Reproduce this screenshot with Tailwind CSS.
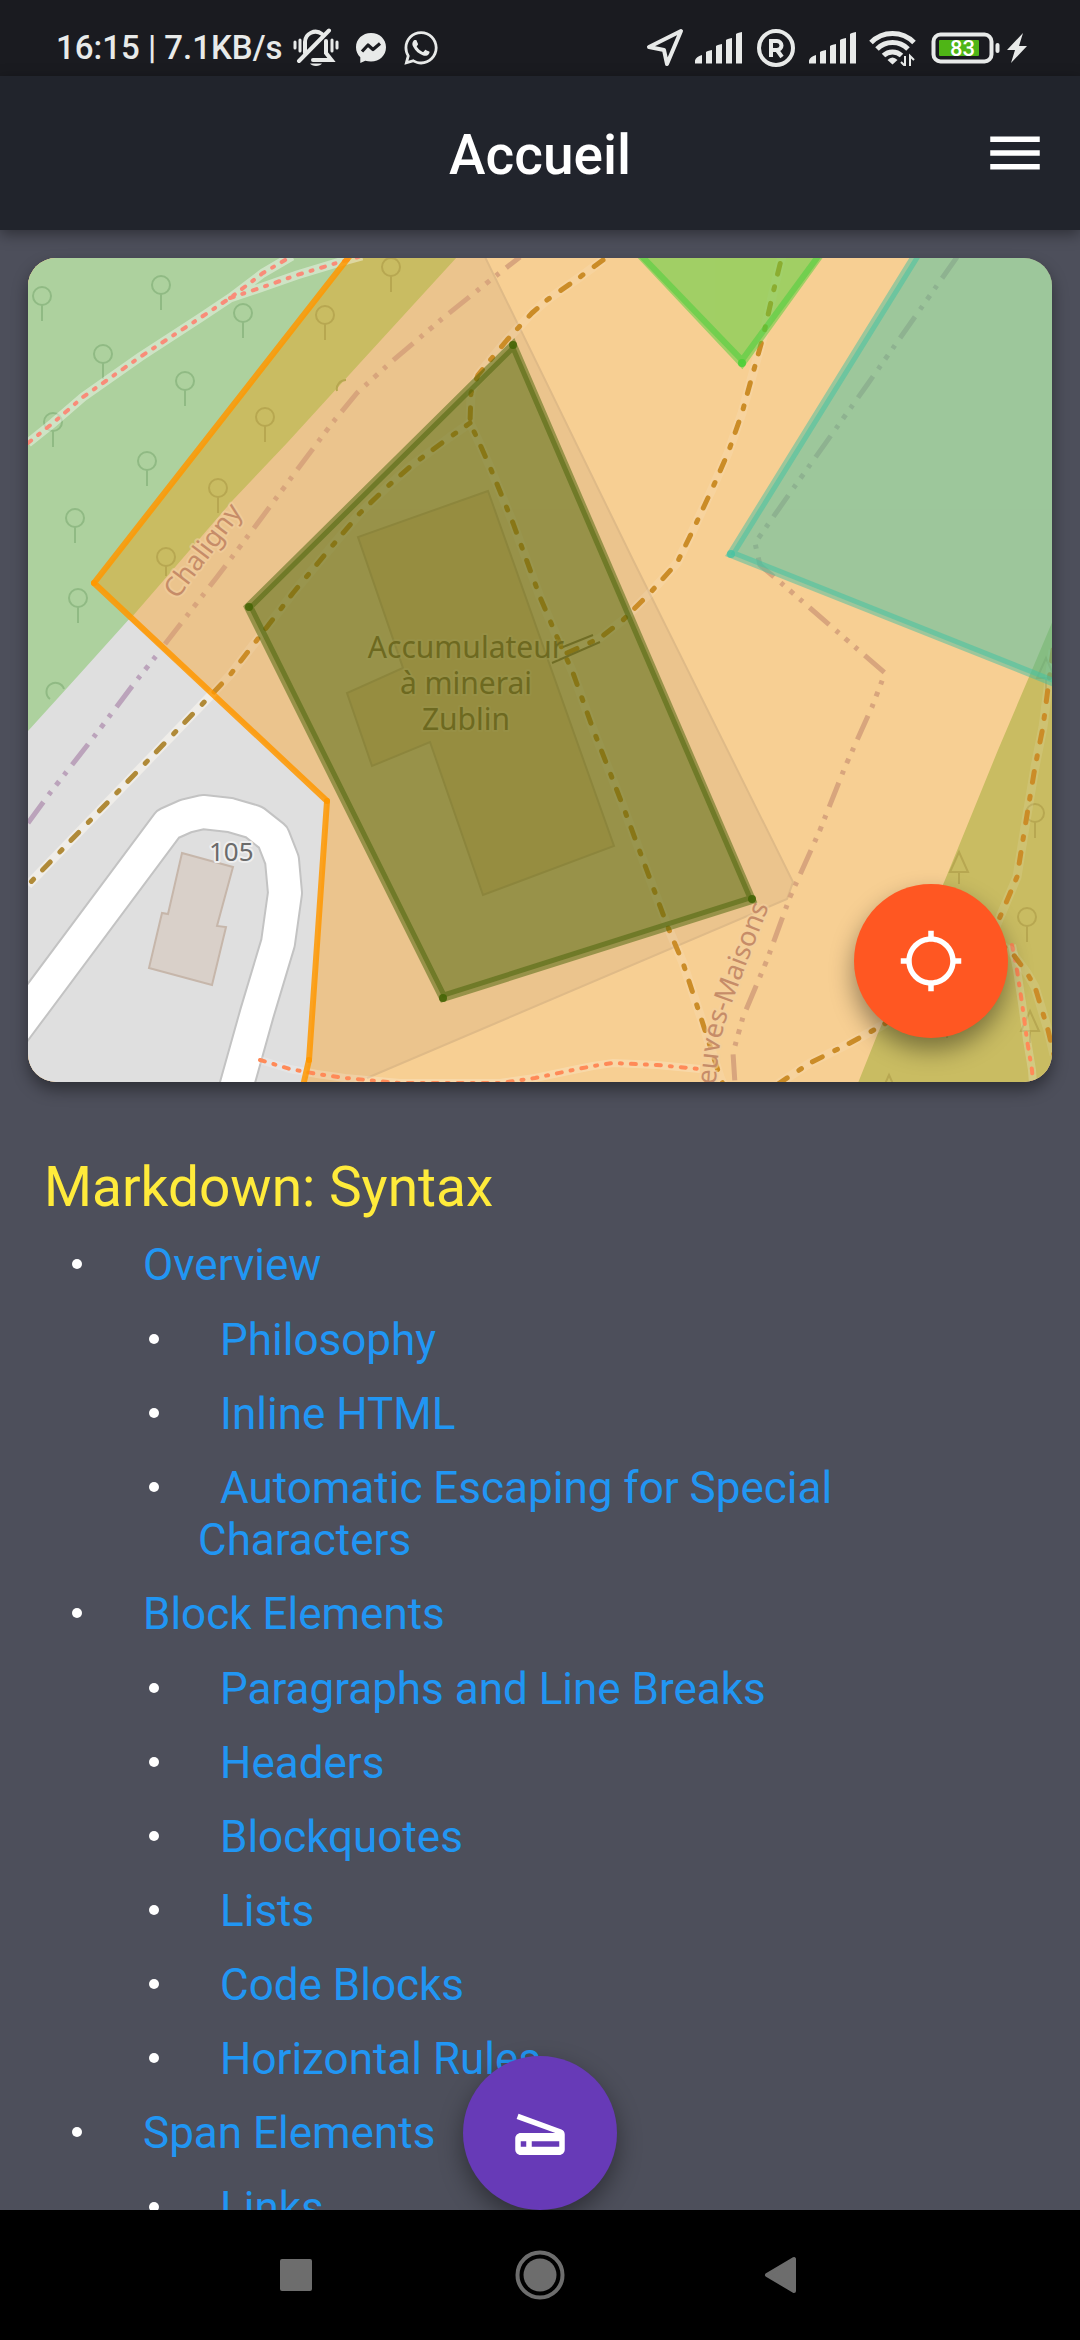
<!DOCTYPE html>
<html lang="fr">
<head>
<meta charset="utf-8">
<meta name="viewport" content="width=device-width, initial-scale=1">
<title>Accueil</title>
<script src="https://cdn.jsdelivr.net/npm/@tailwindcss/browser@4"></script>
</head>
<body class="bg-[#4d4f5b] font-['Roboto',sans-serif]">
<div class="relative flex h-screen flex-col overflow-hidden">

  <!-- Status bar -->
  <div class="flex h-[76px] shrink-0 items-center justify-between bg-[#1a1b20] pl-14 pr-[53px] pt-5 text-[#e8eae9]">
    <div class="flex items-center">
      <span class="whitespace-nowrap text-[33px] leading-10 font-medium">16:15 | 7.1KB/s</span>
      <svg class="ml-[10px] h-10 w-[46px]" viewBox="0 0 46 40" fill="none" stroke="currentColor" stroke-width="4" stroke-linecap="round" aria-hidden="true">
        <path d="M12 25V14a10.500 10.500 0 0 1 17-8M33 13v12l5.500 7H20"/>
        <path d="M6 33 36 2.500"/>
        <path d="M2 14v6M7 12v11M39 12v11M44 14v6" stroke-width="3"/>
        <path d="M17 35.500h12a6.500 4 0 0 1-12 0z" fill="currentColor" stroke="none"/>
      </svg>
      <svg class="ml-4 size-8" viewBox="0 0 32 32" aria-hidden="true">
        <path fill="currentColor" d="M16 1C7.500 1 1 7.200 1 15.200c0 4 1.600 7.500 4.300 10V31l5-2.300c1.800.5 3.700.8 5.700.8 8.500 0 15-6.200 15-14.300S24.500 1 16 1z"/>
        <path fill="none" stroke="#1a1b20" stroke-width="3.200" stroke-linejoin="round" d="m7 19.500 6-6.500 5 4.500 7-6"/>
      </svg>
      <svg class="ml-[14px] size-10" viewBox="0 0 24 24" fill="currentColor" aria-hidden="true">
        <path d="M12.040 2C6.580 2 2.130 6.450 2.130 11.910c0 1.750.46 3.450 1.320 4.950L2.050 22l5.250-1.380c1.450.79 3.080 1.210 4.740 1.210 5.460 0 9.910-4.450 9.910-9.910C21.950 6.450 17.500 2 12.040 2zm0 18.150c-1.480 0-2.930-.4-4.200-1.150l-.3-.18-3.120.82.83-3.040-.2-.31a8.260 8.260 0 0 1-1.260-4.380c0-4.540 3.700-8.240 8.250-8.240s8.240 3.700 8.240 8.240-3.690 8.240-8.240 8.240zm4.520-6.160c-.25-.12-1.470-.72-1.690-.81-.23-.08-.39-.12-.56.13-.16.24-.64.8-.78.97-.15.16-.29.18-.54.06-1.200-.6-2.500-1.500-3.500-3.100-.2-.3.300-.5.700-1.300.07-.16.03-.31-.03-.43s-.56-1.340-.76-1.840c-.2-.48-.41-.42-.56-.43-.5 0-.9 0-1.300.4-.8.900-1 2.200-.3 3.500 1.500 2.800 3.500 4.500 6.100 5.400 1.300.4 3.200.1 3.700-1.600.2-.7.100-.7-.48-.95z"/>
      </svg>
    </div>
    <div class="flex items-center">
      <svg class="h-10 w-10" viewBox="0 0 40 40" fill="none" stroke="currentColor" stroke-width="4" stroke-linejoin="round" aria-hidden="true">
        <path d="M36 3 4 19l15 3 3 14z"/>
      </svg>
      <svg class="ml-[10px] h-8 w-12" viewBox="0 0 48 32" fill="currentColor" aria-hidden="true">
        <path d="M0 31.500v-3q1-4 7-5.500v8.500zM11 31.500V20q1-1 6-2v13.500zM21 31.500V14q1-1 6-2v19.500zM31 31.500V8q1-1 6-2v25.500zM41 31.500V2q1-1 6-2v31.500z"/>
      </svg>
      <svg class="ml-[14px] size-[38px]" viewBox="0 0 38 38" fill="none" stroke="currentColor" stroke-width="4" aria-hidden="true">
        <circle cx="19" cy="19" r="17"/>
        <path d="M14 28V12h6a4.500 4.500 0 0 1 0 9h-6M20 21l5 7"/>
      </svg>
      <svg class="ml-[14px] h-8 w-12" viewBox="0 0 48 32" fill="currentColor" aria-hidden="true">
        <path d="M0 31.500v-3q1-4 7-5.500v8.500zM11 31.500V20q1-1 6-2v13.500zM21 31.500V14q1-1 6-2v19.500zM31 31.500V8q1-1 6-2v25.500zM41 31.500V2q1-1 6-2v31.500z"/>
      </svg>
      <svg class="ml-3 h-9 w-[48px]" viewBox="0 0 48 36" fill="none" stroke="currentColor" stroke-width="5" aria-hidden="true">
        <path d="M2 12.500a30 30 0 0 1 43 0M8 19a22 22 0 0 1 31 0M14.500 25.500a13 13 0 0 1 18 0"/>
        <path d="M23.500 34.500 18.500 30q5-5 10 0z" fill="currentColor" stroke="none"/>
        <path d="M36 26v10l-4-4M41 36V26l4 4" stroke-width="2"/>
      </svg>
      <svg class="ml-[14px] h-8 w-[70px]" viewBox="0 0 70 32" aria-hidden="true">
        <rect x="2.500" y="2.500" width="58" height="27" rx="7" fill="none" stroke="currentColor" stroke-width="4"/>
        <rect x="8" y="8" width="40" height="16" rx="1" fill="#4fb516"/>
        <rect x="64.500" y="11" width="4" height="10" rx="2" fill="currentColor"/>
        <text x="31.500" y="24" text-anchor="middle" font-family="Roboto, sans-serif" font-size="22" font-weight="500" fill="#fff">83</text>
      </svg>
      <svg class="ml-[6px] h-[30px] w-5" viewBox="0 0 20 30" fill="currentColor" aria-hidden="true"><path d="M16 0 0 17h8L4 30l16-17h-8z"/></svg>
    </div>
  </div>

  <!-- App bar -->
  <header class="relative z-10 grid h-[154px] shrink-0 grid-cols-[66px_1fr_66px] items-center bg-[#21242c] px-8 text-white shadow-[0_4px_14px_rgba(0,0,0,0.4)]">
    <h1 class="col-start-2 pt-1 text-center text-[55px] leading-[64px] font-medium">Accueil</h1>
    <button type="button" aria-label="Menu" class="size-[66px]">
      <svg class="size-[66px]" viewBox="0 0 24 24" fill="currentColor"><path d="M3 18h18v-2H3v2zm0-5h18v-2H3v2zm0-7v2h18V6H3z"/></svg>
    </button>
  </header>

  <main class="min-h-0 flex-1 overflow-y-auto [scrollbar-width:none]">
    <!-- Map card -->
    <section aria-label="Carte" class="relative mx-7 mt-7 overflow-hidden rounded-[28px] shadow-[0_8px_16px_rgba(0,0,0,0.4)]">
      <svg class="block h-auto w-full" viewBox="28 258 1024 824" fill="none">
        <defs>
          <g id="tree"><circle r="9" /><path d="M0 9v16"/></g>
          <g id="pine"><path d="M0-10 9 10H-9zM0 10v12"/></g>
          <path id="track-b" d="M603 260 580 277 547 300 532 313 507 340 492 358 478 375 471 393 470 423 478 440 490 467 513 523 540 597 557 637 573 673 593 729 623 806 667 925 683 963 702 1021 720 1077 723 1084"/>
          <path id="track-c" d="M567 653 600 638 623 620 650 593 677 563 693 530 713 487 728 453 742 413 753 373 763 337 773 293 782 256"/>
          <path id="track-d" d="M1053 650 1048 688 1043 727 1035 767 1025 827 1017 877 1000 917 990 940 1010 950 1027 973 1035 987 1048 1030 1054 1055"/>
          <path id="track-e" d="M778 1084 810 1063 850 1043 883 1025 960 970"/>
          <path id="track-a" d="M214 692 230 675 257 640 293 593 333 545 360 513 387 487 412 465 450 437 470 423"/>
          <path id="foot-a" d="M28 443 53 423 83 397 140 357 200 318 230 298 263 273 292 256M230 298 260 288 297 275 340 262 362 256"/>
          <path id="foot-b" d="M260 1060 290 1069 317 1074 345 1078 400 1083H500L535 1078 573 1070 593 1066 613 1063 657 1065 700 1069M1012 945 1017 970 1022 1003 1027 1040 1032 1070 1033 1084"/>
          <path id="names" d="M716 1180V1082Q718 1045 726 1020C736 990 748 960 769 906"/>
        </defs>

        <!-- Land use -->
        <path fill="#f7cf93" d="M28 257h1025v826H28z"/>
        <path fill="#ebc48d" d="M485 257 633 560 793 882 787 899 367 1078 350 1083H28V257z"/>
        <path stroke="#dfba87" stroke-width="2" d="M485 257 633 560 793 882 787 899 367 1078"/>
        <path fill="#dfdfdf" d="M28 620H130L327 801 309 1060 304 1083H28z"/>
        <path fill="#add19e" d="M28 257H350L94 583 131 617 77 677 28 731z"/>
        <path fill="#c9bc62" d="M350 257 94 583 131 618 170 573 233 500 287 443 360 363 457 257z"/>
        <path fill="#c9bc62" d="M1053 620 1029 677 998 750 945 880 878 1033 858 1083H1053z"/>

        <!-- Trees -->
        <g stroke="#90ba84" stroke-width="2">
          <use href="#tree" x="42" y="296"/><use href="#tree" x="161" y="285"/><use href="#tree" x="243" y="313"/>
          <use href="#tree" x="103" y="354"/><use href="#tree" x="185" y="381"/><use href="#tree" x="53" y="422"/>
          <use href="#tree" x="147" y="461"/><use href="#tree" x="75" y="518"/><use href="#tree" x="78" y="598"/>
          <path d="M50 699a9 9 0 1 1 14-10"/>
        </g>
        <g stroke="#b7a751" stroke-width="2">
          <use href="#tree" x="325" y="315"/><use href="#tree" x="265" y="417"/><use href="#tree" x="218" y="488"/>
          <path d="M337 391a9 9 0 0 1 9-11M166 566v10"/><circle cx="166" cy="557" r="9"/>
          <use href="#tree" x="391" y="267"/><use href="#tree" x="1035" y="813"/><use href="#tree" x="1027" y="917"/>
          <use href="#pine" x="959" y="862"/><use href="#pine" x="1030" y="1021"/><use href="#pine" x="889" y="1085"/><use href="#pine" x="947" y="1016"/><use href="#pine" x="1046" y="668"/>
        </g>

        <!-- Road -->
        <g stroke-linejoin="round">
          <path stroke="#c3c3c3" stroke-width="36" d="M10 1036 28 1012 168 824 186 816 203 812 230 815 254 822 273 837 282 860 285 893 278 943 257 1013 234 1095"/>
          <path stroke="#fff" stroke-width="32" d="M10 1036 28 1012 168 824 186 816 203 812 230 815 254 822 273 837 282 860 285 893 278 943 257 1013 234 1095"/>
        </g>
        <path fill="#d9d0c9" stroke="#c6b6aa" stroke-width="2" d="m182 853 51 14-16 59 9 1-14 58-63-17 13-55 6 1z"/>

        <!-- Storage building -->
        <path fill="#e7b97b" stroke="#d3aa72" stroke-width="2" d="M488 491 358 537 403 668 347 693 372 766 430 742 483 895 614 846z"/>

        <!-- Footpaths -->
        <g stroke="#fff" stroke-opacity=".4" stroke-width="9"><use href="#foot-a"/></g>
        <g stroke="#fff" stroke-opacity=".2" stroke-width="8"><use href="#foot-b"/></g>
        <g stroke="#f98c79" stroke-width="4" stroke-linecap="round" stroke-dasharray="4 9 2 9"><use href="#foot-a"/></g>
        <g stroke="#ff8a58" stroke-width="4" stroke-linecap="round" stroke-dasharray="5 9 2 9"><use href="#foot-b"/></g>

        <!-- Tracks -->
        <g stroke="#fff" stroke-opacity=".1" stroke-width="9" stroke-linejoin="round">
          <use href="#track-a"/><use href="#track-b"/><use href="#track-c"/><use href="#track-d"/><use href="#track-e"/>
        </g>
        <path stroke="#efede9" stroke-width="9" d="M28 885 214 692"/>
        <g stroke="#cb8c27" stroke-width="5" stroke-linejoin="round" stroke-linecap="round" stroke-dasharray="11 14 3 13">
          <use href="#track-a"/><use href="#track-b"/><use href="#track-c"/><use href="#track-d"/><use href="#track-e"/>
          <path stroke="#b08a38" d="M28 885 212 694" stroke-dashoffset="20"/>
        </g>
        <path stroke="#9b7a45" stroke-width="2" d="M563 647 593 635M552 663 600 642"/>

        <!-- Municipal boundaries -->
        <g stroke="#d8a57d" stroke-width="5" stroke-dasharray="26 9 4 8 5 8 4 9">
          <path stroke="#bba3bb" d="M28 823 50 793 93 738 133 685 160 651"/>
          <path d="M165 644 217 577 260 520 297 470 333 422 357 393 390 363 443 318 493 278 520 257"/>
          <path d="M957 257 867 385 790 493 755 543 760 565 787 588 810 608 885 673 872 707 845 767 820 830 790 897 767 960 743 1017 733 1053 735 1084"/>
        </g>

        <!-- Labels -->
        <g font-family="'Noto Sans', sans-serif" paint-order="stroke" stroke-linejoin="round">
          <g fill="#94713a" stroke="#f2d3a0" stroke-opacity=".3" stroke-width="4" font-size="30" text-anchor="middle">
            <text x="466" y="658">Accumulateur</text>
            <text x="466" y="694">à minerai</text>
            <text x="466" y="730">Zublin</text>
          </g>
          <text x="209" y="861" font-size="26" fill="#6b6b6b" stroke="#efefef" stroke-width="4">105</text>
          <g fill="#c68c68" stroke="#f3cfa0" stroke-opacity=".6" stroke-width="4" font-size="27">
            <text transform="translate(177 600) rotate(-53)">Chaligny</text>
            <text text-anchor="end"><textPath href="#names" startOffset="100%">Neuves-Maisons</textPath></text>
          </g>
        </g>

        <!-- Zones -->
        <path stroke="#ff9800" stroke-opacity=".85" stroke-width="6" stroke-linejoin="round" d="M352 253 94 583 327 801 309 1060 303 1086"/>
        <g fill="#ff9800"><circle cx="94" cy="583" r="3"/><circle cx="327" cy="801" r="3"/><circle cx="309" cy="1060" r="3"/></g>

        <path opacity=".5" fill="#476207" stroke="#476207" stroke-width="8" d="M513 345 248 607 443 998 752 900z"/>
        <path stroke="#476207" stroke-opacity=".5" stroke-width="5" d="M513 348 251 607 444 995 750 898z"/>
        <g fill="#456505" fill-opacity=".9"><circle cx="513" cy="345" r="4"/><circle cx="249" cy="607" r="4"/><circle cx="443" cy="998" r="4"/><circle cx="752" cy="899" r="4"/></g>

        <path opacity=".5" fill="#4dcf39" stroke="#4dcf39" stroke-width="8" d="M631 245 742 363 827 245z"/>
        <path stroke="#45cf39" stroke-opacity=".5" stroke-width="6" d="M633 247 742 360 825 247"/>
        <circle cx="742" cy="363" r="4" fill="#4dcf39" fill-opacity=".9"/>

        <path opacity=".5" fill="#45bfa3" stroke="#45bfa3" stroke-width="8" d="M922 245 731 554 1080 693V245z"/>
        <path stroke="#45c3a3" stroke-opacity=".55" stroke-width="5" d="M925 245 734 553 1080 691"/>
        <circle cx="731" cy="554" r="4" fill="#45c3a3" fill-opacity=".8"/>
      </svg>
      <button type="button" aria-label="Me localiser" class="absolute right-11 bottom-11 flex size-[154px] items-center justify-center rounded-full bg-[#ff5722] text-white shadow-[0_12px_24px_rgba(0,0,0,0.4)]">
        <svg class="size-[66px]" viewBox="0 0 24 24" fill="currentColor"><path d="M20.940 11c-.46-4.170-3.770-7.480-7.940-7.940V1h-2v2.060C6.830 3.520 3.520 6.830 3.060 11H1v2h2.060c.46 4.170 3.770 7.480 7.940 7.940V23h2v-2.060c4.170-.46 7.480-3.770 7.940-7.940H23v-2h-2.060zM12 19c-3.870 0-7-3.130-7-7s3.130-7 7-7 7 3.130 7 7-3.130 7-7 7z"/></svg>
      </button>
    </section>

    <!-- Document -->
    <article class="px-11 pt-[73px] text-[44px] leading-[52px] text-[#2196f3]">
      <h2 class="text-[55px] leading-[64px] text-[#ffeb3b]">Markdown: Syntax</h2>
      <ul class="mt-5 flex flex-col gap-[22px] pl-[77px] [&_li]:relative [&_li]:before:absolute [&_li]:before:top-5 [&_li]:before:left-[-49px] [&_li]:before:size-[10px] [&_li]:before:rounded-full [&_li]:before:bg-white">
        <li>
          <a href="#overview" class="block indent-[22px]">Overview</a>
          <ul class="mt-[23px] flex flex-col gap-[22px] pl-[77px]">
            <li><a href="#philosophy" class="block indent-[22px]">Philosophy</a></li>
            <li><a href="#html" class="block indent-[22px]">Inline HTML</a></li>
            <li><a href="#autoescape" class="block max-w-[720px] indent-[22px]">Automatic Escaping for Special Characters</a></li>
          </ul>
        </li>
        <li>
          <a href="#block" class="block indent-[22px]">Block Elements</a>
          <ul class="mt-[23px] flex flex-col gap-[22px] pl-[77px]">
            <li><a href="#p" class="block indent-[22px]">Paragraphs and Line Breaks</a></li>
            <li><a href="#header" class="block indent-[22px]">Headers</a></li>
            <li><a href="#blockquote" class="block indent-[22px]">Blockquotes</a></li>
            <li><a href="#list" class="block indent-[22px]">Lists</a></li>
            <li><a href="#precode" class="block indent-[22px]">Code Blocks</a></li>
            <li><a href="#hr" class="block indent-[22px]">Horizontal Rules</a></li>
          </ul>
        </li>
        <li>
          <a href="#span" class="block indent-[22px]">Span Elements</a>
          <ul class="mt-[23px] flex flex-col gap-[22px] pl-[77px]">
            <li><a href="#link" class="block indent-[22px]">Links</a></li>
          </ul>
        </li>
      </ul>
    </article>
  </main>

  <button type="button" aria-label="Scanner" class="absolute bottom-[130px] left-1/2 flex size-[154px] -translate-x-1/2 items-center justify-center rounded-full bg-[#673ab7] text-white shadow-[0_10px_24px_rgba(0,0,0,0.4)]">
    <svg class="size-[66px]" viewBox="0 0 24 24" fill="currentColor"><path d="M19.800 10.700 4.200 5l-.7 1.900L17.600 12H5c-1.100 0-2 .9-2 2v4c0 1.100.9 2 2 2h14c1.100 0 2-.9 2-2v-5.500c0-.8-.5-1.600-1.200-1.800zM7 17H5v-2h2v2zm12 0H9v-2h10v2z"/></svg>
  </button>

  <!-- System navigation -->
  <nav aria-label="Navigation système" class="relative z-10 flex h-[130px] shrink-0 items-center justify-center gap-[180px] bg-black text-[#6d6d6d]">
    <button type="button" aria-label="Applications récentes" class="size-16"><svg class="size-16" viewBox="0 0 64 64" fill="currentColor"><rect x="16" y="16" width="32" height="32" rx="2"/></svg></button>
    <button type="button" aria-label="Accueil du téléphone" class="size-16"><svg class="size-16" viewBox="0 0 64 64" fill="currentColor"><circle cx="32" cy="32" r="16.500"/><circle cx="32" cy="32" r="22.500" fill="none" stroke="currentColor" stroke-width="4"/></svg></button>
    <button type="button" aria-label="Retour" class="size-16"><svg class="size-16" viewBox="0 0 64 64" fill="currentColor" stroke="currentColor" stroke-width="4" stroke-linejoin="round"><path d="M15 32 42 16v32z"/></svg></button>
  </nav>
</div>
</body>
</html>
